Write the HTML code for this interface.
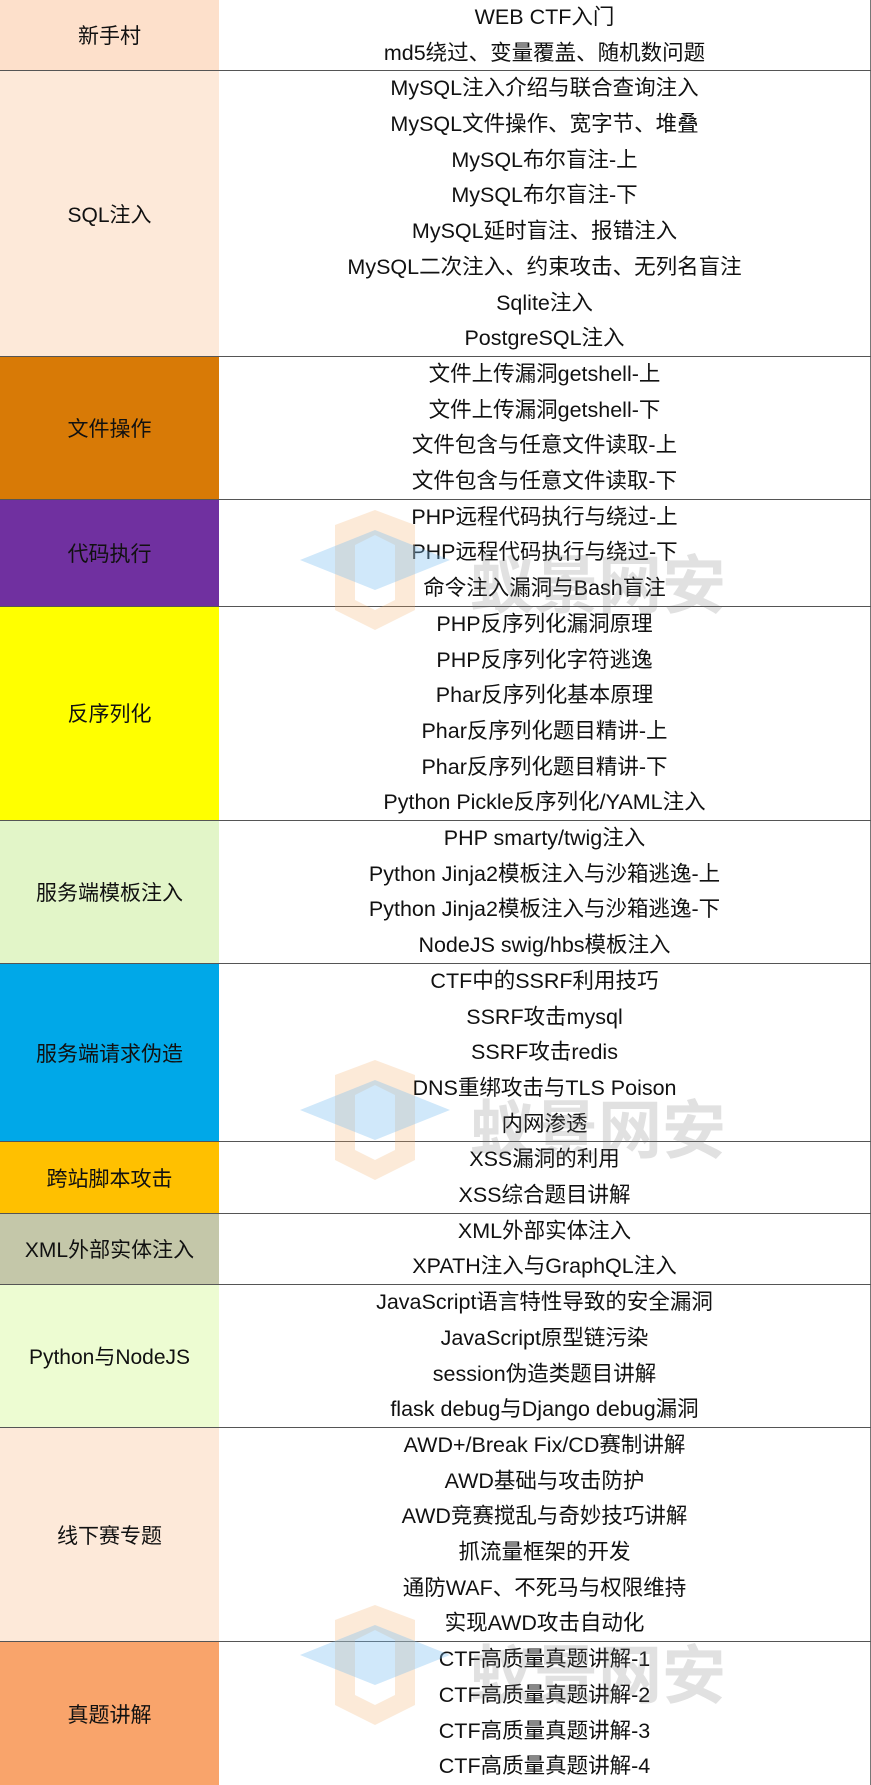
<!DOCTYPE html>
<html><head><meta charset="utf-8"><style>
html,body{margin:0;padding:0;background:#fff}
body{width:871px;height:1785px;overflow:hidden;position:relative;font-family:"Liberation Sans","Noto Sans CJK SC",sans-serif;color:#111}
.g{display:flex;border-bottom:1px solid #555;box-sizing:border-box;width:871px}
.l{width:219px;display:flex;align-items:center;justify-content:center;font-size:21px}
.r{flex:1;border-right:1px solid #777}
.r div{height:35.7px;line-height:35.7px;text-align:center;font-size:21.5px;white-space:nowrap}
.wm{position:absolute;left:470px;font-size:64px;font-weight:bold;color:rgba(120,120,120,0.22);font-family:"Noto Sans CJK SC",sans-serif}
.cap{position:absolute;left:300px;width:150px;height:120px}
</style></head><body>
<div class="g" style="height:71.4px"><div class="l" style="background:#fde0cb">新手村</div><div class="r"><div>WEB CTF入门</div><div>md5绕过、变量覆盖、随机数问题</div></div></div>
<div class="g" style="height:285.6px"><div class="l" style="background:#fde9d9">SQL注入</div><div class="r"><div>MySQL注入介绍与联合查询注入</div><div>MySQL文件操作、宽字节、堆叠</div><div>MySQL布尔盲注-上</div><div>MySQL布尔盲注-下</div><div>MySQL延时盲注、报错注入</div><div>MySQL二次注入、约束攻击、无列名盲注</div><div>Sqlite注入</div><div>PostgreSQL注入</div></div></div>
<div class="g" style="height:142.8px"><div class="l" style="background:#d87a06">文件操作</div><div class="r"><div>文件上传漏洞getshell-上</div><div>文件上传漏洞getshell-下</div><div>文件包含与任意文件读取-上</div><div>文件包含与任意文件读取-下</div></div></div>
<div class="g" style="height:107.1px"><div class="l" style="background:#7030a0">代码执行</div><div class="r"><div>PHP远程代码执行与绕过-上</div><div>PHP远程代码执行与绕过-下</div><div>命令注入漏洞与Bash盲注</div></div></div>
<div class="g" style="height:214.2px"><div class="l" style="background:#ffff00">反序列化</div><div class="r"><div>PHP反序列化漏洞原理</div><div>PHP反序列化字符逃逸</div><div>Phar反序列化基本原理</div><div>Phar反序列化题目精讲-上</div><div>Phar反序列化题目精讲-下</div><div>Python Pickle反序列化/YAML注入</div></div></div>
<div class="g" style="height:142.8px"><div class="l" style="background:#e2f5c8">服务端模板注入</div><div class="r"><div>PHP smarty/twig注入</div><div>Python Jinja2模板注入与沙箱逃逸-上</div><div>Python Jinja2模板注入与沙箱逃逸-下</div><div>NodeJS swig/hbs模板注入</div></div></div>
<div class="g" style="height:178.5px"><div class="l" style="background:#00a8e8">服务端请求伪造</div><div class="r"><div>CTF中的SSRF利用技巧</div><div>SSRF攻击mysql</div><div>SSRF攻击redis</div><div>DNS重绑攻击与TLS Poison</div><div>内网渗透</div></div></div>
<div class="g" style="height:71.4px"><div class="l" style="background:#ffc000">跨站脚本攻击</div><div class="r"><div>XSS漏洞的利用</div><div>XSS综合题目讲解</div></div></div>
<div class="g" style="height:71.4px"><div class="l" style="background:#c4c7a9">XML外部实体注入</div><div class="r"><div>XML外部实体注入</div><div>XPATH注入与GraphQL注入</div></div></div>
<div class="g" style="height:142.8px"><div class="l" style="background:#edfcd2">Python与NodeJS</div><div class="r"><div>JavaScript语言特性导致的安全漏洞</div><div>JavaScript原型链污染</div><div>session伪造类题目讲解</div><div>flask debug与Django debug漏洞</div></div></div>
<div class="g" style="height:214.2px"><div class="l" style="background:#fde9d9">线下赛专题</div><div class="r"><div>AWD+/Break Fix/CD赛制讲解</div><div>AWD基础与攻击防护</div><div>AWD竞赛搅乱与奇妙技巧讲解</div><div>抓流量框架的开发</div><div>通防WAF、不死马与权限维持</div><div>实现AWD攻击自动化</div></div></div>
<div class="g" style="height:142.8px;border-bottom:none"><div class="l" style="background:#f9a46b">真题讲解</div><div class="r"><div>CTF高质量真题讲解-1</div><div>CTF高质量真题讲解-2</div><div>CTF高质量真题讲解-3</div><div>CTF高质量真题讲解-4</div></div></div>

<svg class="cap" style="top:510px" viewBox="0 0 150 120"><path d="M35 15 L75 0 L115 15 L115 100 L75 120 L35 100 Z M55 35 L55 90 L75 100 L95 90 L95 35 L75 25 Z" fill="rgba(245,170,100,0.25)" fill-rule="evenodd"/><path d="M0 50 L75 20 L150 50 L75 80 Z" fill="rgba(120,190,240,0.35)"/></svg>
<div class="wm" style="top:535px">蚁景网安</div>
<svg class="cap" style="top:1060px" viewBox="0 0 150 120"><path d="M35 15 L75 0 L115 15 L115 100 L75 120 L35 100 Z M55 35 L55 90 L75 100 L95 90 L95 35 L75 25 Z" fill="rgba(245,170,100,0.25)" fill-rule="evenodd"/><path d="M0 50 L75 20 L150 50 L75 80 Z" fill="rgba(120,190,240,0.35)"/></svg>
<div class="wm" style="top:1080px">蚁景网安</div>
<svg class="cap" style="top:1605px" viewBox="0 0 150 120"><path d="M35 15 L75 0 L115 15 L115 100 L75 120 L35 100 Z M55 35 L55 90 L75 100 L95 90 L95 35 L75 25 Z" fill="rgba(245,170,100,0.25)" fill-rule="evenodd"/><path d="M0 50 L75 20 L150 50 L75 80 Z" fill="rgba(120,190,240,0.35)"/></svg>
<div class="wm" style="top:1625px">蚁景网安</div>
</body></html>
